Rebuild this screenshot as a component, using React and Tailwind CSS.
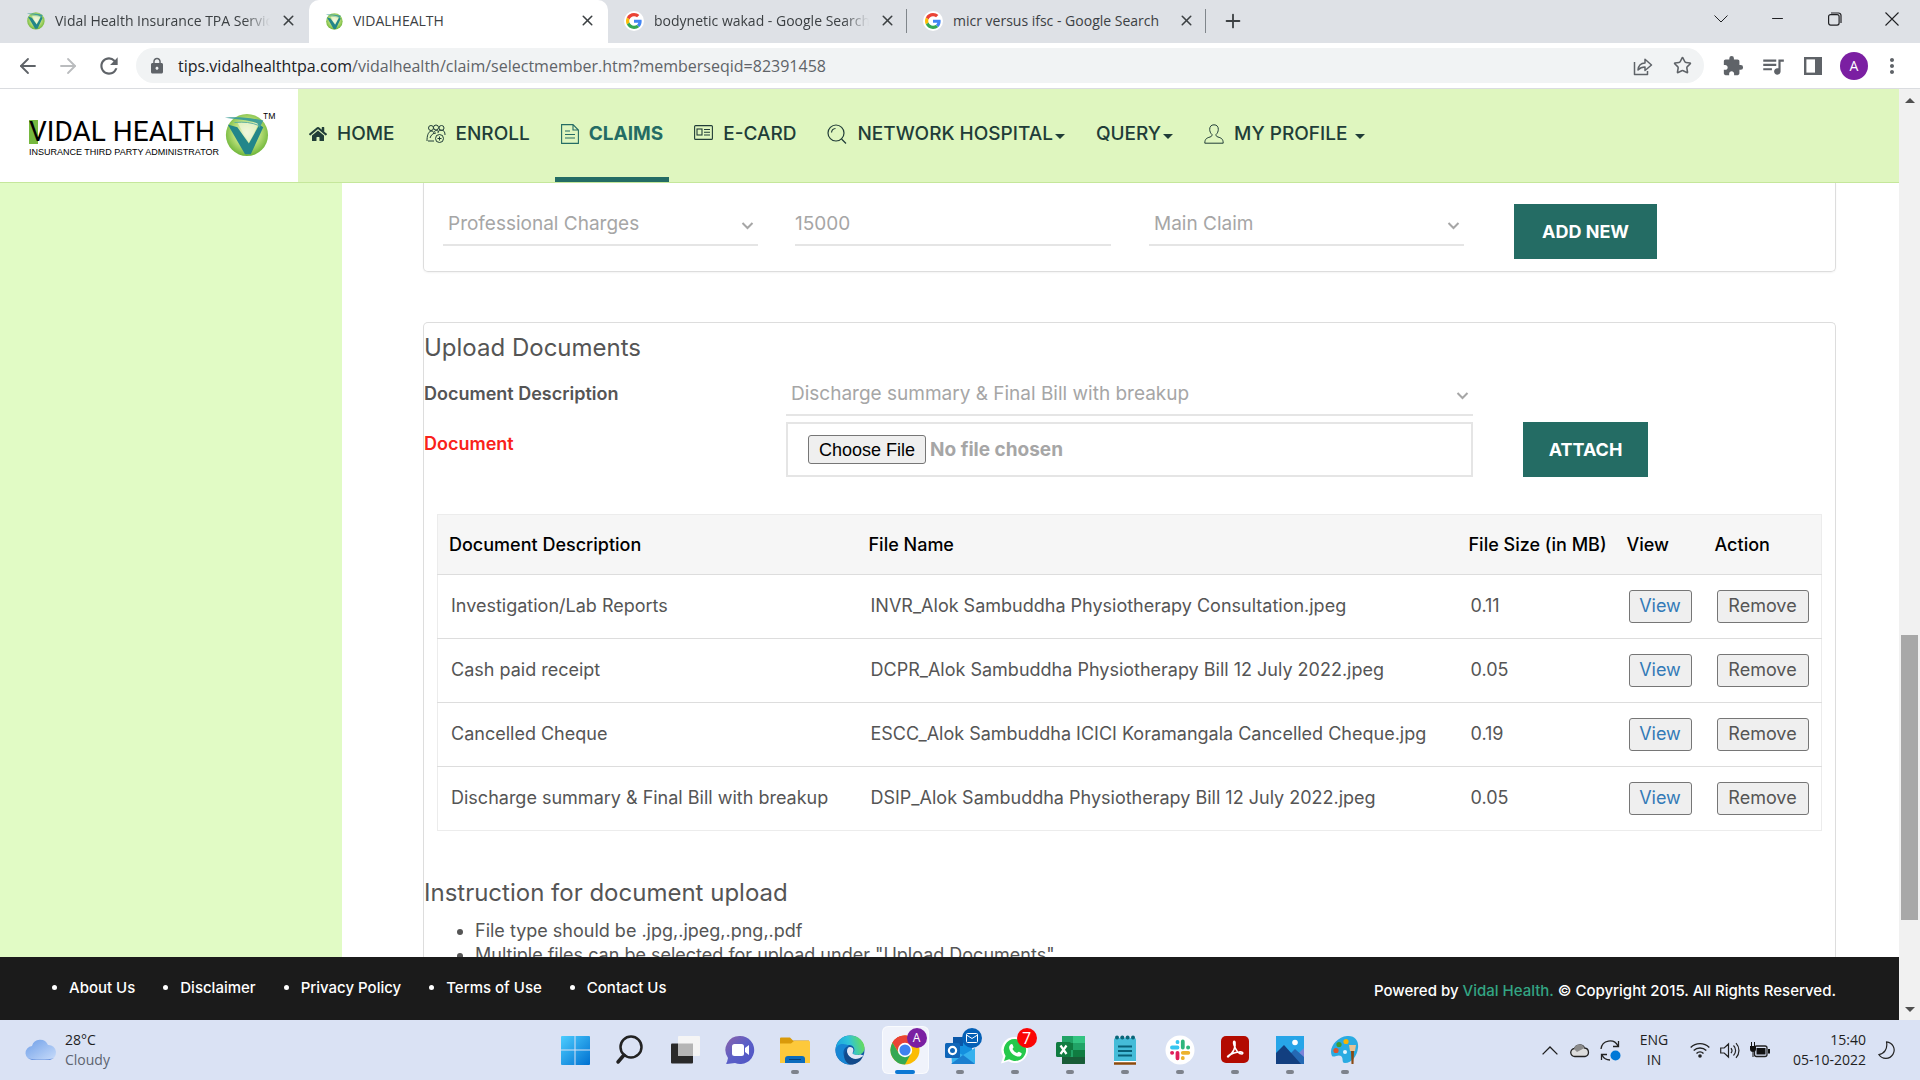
import React from "react";
import { ArrowLeft, ArrowRight, Star, X, Plus, Minus } from "lucide-react";
import { MdLock, MdExtension, MdQueueMusic, MdMoreVert, MdRefresh } from "react-icons/md";
import { FaHome } from "react-icons/fa";

const page = "font-[Inter,sans-serif]";

function VidalMark({ className }) {
  return (
    <svg viewBox="0 0 48 48" className={className} aria-hidden="true">
      <defs>
        <radialGradient id="vm" cx="0.5" cy="0.45" r="0.55">
          <stop offset="0" stopColor="#f4fae2" />
          <stop offset="0.6" stopColor="#b5dc74" />
          <stop offset="1" stopColor="#6fb63a" />
        </radialGradient>
      </defs>
      <ellipse cx="25" cy="25" rx="22" ry="22" fill="url(#vm)" />
      <path d="M15 12 L38 12 L27 33 Z" fill="#f0f7da" opacity="0.7" />
      <path d="M5 14 L15 17 L27 34 L38 14 L42 17 L29 45 L23 45 Z" fill="#23868a" />
      <path d="M2 7 C16 6 28 7 42 10 L38 18 L36 13 C28 9 14 9 2 7 Z" fill="#3f9f98" />
      <path d="M12 12 C22 11 30 12 37 15" stroke="#5aada0" fill="none" />
    </svg>
  );
}

function GoogleG() {
  return (
    <span className="flex size-5 shrink-0 items-center justify-center rounded-full bg-white">
      <svg viewBox="0 0 48 48" className="size-4" aria-hidden="true">
        <path fill="#EA4335" d="M24 9.5c3.54 0 6.71 1.22 9.21 3.6l6.85-6.85C35.9 2.38 30.47 0 24 0 14.62 0 6.51 5.38 2.56 13.22l7.98 6.19C12.43 13.72 17.74 9.5 24 9.5z" />
        <path fill="#4285F4" d="M46.98 24.55c0-1.57-.15-3.09-.38-4.55H24v9.02h12.94c-.58 2.96-2.26 5.48-4.78 7.18l7.73 6c4.51-4.18 7.09-10.36 7.09-17.65z" />
        <path fill="#FBBC05" d="M10.53 28.59c-.48-1.45-.76-2.99-.76-4.59s.27-3.14.76-4.59l-7.98-6.19C.92 16.46 0 20.12 0 24s.92 7.54 2.56 10.78l7.97-6.19z" />
        <path fill="#34A853" d="M24 48c6.48 0 11.93-2.13 15.89-5.81l-7.73-6c-2.15 1.45-4.92 2.3-8.16 2.3-6.26 0-11.57-4.22-13.47-9.91l-7.98 6.19C6.51 42.62 14.62 48 24 48z" />
      </svg>
    </span>
  );
}

function Tab({ title, icon, active, divider, fade }) {
  return (
    <div className={"flex h-full w-[299px] items-center gap-2.5 pb-0.5 pl-4 pr-3 " + (active ? "rounded-t-[10px] bg-white" : "")}>
      {icon}
      <span className={"min-w-0 flex-1 overflow-hidden whitespace-nowrap text-sm text-[#3c4043] " + (fade ? "[mask-image:linear-gradient(to_right,black_88%,transparent)]" : "")}>{title}</span>
      <button type="button" aria-label={"Close " + title} className="text-[#3c4043]"><X size={17} strokeWidth={2.2} /></button>
      {divider && <span className="-mr-3 h-6 w-px bg-[#80868b]" />}
    </div>
  );
}

function BrowserChrome() {
  return (
    <header className="shrink-0 font-['Open_Sans',sans-serif]">
      <div className="flex h-[43px] items-center bg-[#dee1e6]">
        <div className="flex h-full w-[309px] items-center pl-2.5">
          <Tab title="Vidal Health Insurance TPA Services" fade icon={<VidalMark className="size-[19px] shrink-0" />} />
        </div>
        <Tab title="VIDALHEALTH" active icon={<VidalMark className="size-[18px] shrink-0" />} />
        <Tab title="bodynetic wakad - Google Search" fade divider icon={<GoogleG />} />
        <Tab title="micr versus ifsc - Google Search" divider icon={<GoogleG />} />
        <button type="button" aria-label="New tab" className="ml-4 pb-0.5 text-[#3c4043]"><Plus size={22} strokeWidth={2} /></button>
        <div className="ml-auto flex h-full items-center pb-1.5 text-[#202124]">
          <button type="button" aria-label="Search tabs" className="flex w-[57px] justify-center">
            <svg width="16" height="10" viewBox="0 0 16 10" fill="none" stroke="currentColor"><path d="M1.500 1.500 8 8l6.500-6.500" /></svg>
          </button>
          <button type="button" aria-label="Minimize" className="flex w-[57px] justify-center"><Minus size={17} strokeWidth={1.500} /></button>
          <button type="button" aria-label="Restore" className="flex w-[57px] justify-center">
            <svg width="14" height="14" viewBox="0 0 14 14" fill="none" stroke="currentColor" strokeWidth="1.2"><rect x="0.600" y="2.600" width="10.500" height="10.500" rx="2" /><path d="M3 1h7.500A2.500 2.500 0 0 1 13 3.500V11" /></svg>
          </button>
          <button type="button" aria-label="Close window" className="flex w-[57px] justify-center">
            <svg width="14" height="14" viewBox="0 0 14 14" stroke="currentColor" strokeWidth="1.100"><path d="M.5.5l13 13M13.500.5l-13 13" /></svg>
          </button>
        </div>
      </div>
      <div className="flex h-[46px] items-center border-b border-[#dadce0] bg-white px-4 text-[#5f6368]">
        <button type="button" aria-label="Back" className="mr-4"><ArrowLeft size={24} strokeWidth={1.800} /></button>
        <button type="button" aria-label="Forward" className="mr-4 text-[#babcbe]"><ArrowRight size={24} strokeWidth={1.800} /></button>
        <button type="button" aria-label="Reload" className="mr-3.5"><MdRefresh size={26} /></button>
        <div className="flex h-[35px] flex-1 items-center rounded-full bg-[#f1f3f4] px-3">
          <MdLock size={18} className="mr-3" />
          <span className="flex-1 text-base"><span className="text-[#202124]">tips.vidalhealthtpa.com</span>/vidalhealth/claim/selectmember.htm?memberseqid=82391458</span>
          <button type="button" aria-label="Share" className="mr-5">
            <svg width="20" height="20" viewBox="0 0 20 20" fill="none" stroke="currentColor" strokeWidth="1.500"><path d="M1.500 6v12.500h13V15M5 14c.5-4.500 3-7 7-7V3.200L18.500 9 12 14.500V11c-3 0-5 .8-7 3z" strokeLinejoin="round" /></svg>
          </button>
          <button type="button" aria-label="Bookmark"><Star size={19} strokeWidth={2} /></button>
        </div>
        <button type="button" aria-label="Extensions" className="ml-[18px]"><MdExtension size={22} /></button>
        <button type="button" aria-label="Media" className="ml-4"><MdQueueMusic size={26} /></button>
        <button type="button" aria-label="Side panel" className="ml-[18px]">
          <svg width="18" height="18" viewBox="0 0 18 18" fill="none" stroke="currentColor"><rect x="1.200" y="1.200" width="15.600" height="15.600" strokeWidth="2.400" /><path d="M13.500 1v16" strokeWidth="5" /></svg>
        </button>
        <button type="button" aria-label="Profile" className="ml-[18px] flex size-7 items-center justify-center rounded-full bg-[#7b1fa2] text-sm text-white">A</button>
        <button type="button" aria-label="Menu" className="ml-3"><MdMoreVert size={24} /></button>
      </div>
    </header>
  );
}

const navIcons = {
  home: <FaHome size={18} />,
  enroll: (
    <svg width="20" height="20" viewBox="0 0 20 20" fill="none" stroke="currentColor" strokeWidth="1"><circle cx="5" cy="4" r="2.500" /><circle cx="10" cy="3.500" r="2.500" /><circle cx="15.500" cy="4" r="2.500" /><path d="M1 17c0-5 1-9 4-10 2 0 3 1 3 3M12 9c0-2 1-3 3-3 3 0 4 2 4 5M2 17h6M8 8c1-2 4-2 5 0M4 14c1-3 3-5 6-5" /><circle cx="13.500" cy="14.500" r="4" /><path d="M13.500 12.500v4M11.500 14.500h4" /></svg>
  ),
  claims: (
    <svg width="18" height="20" viewBox="0 0 18 20" fill="none" stroke="currentColor" strokeWidth="1.100"><path d="M.6.6h11.400l5.400 5.400v13.400H.6zM12 .6V6h5.400M4 7h5M4 10.500h10M4 14h10" /></svg>
  ),
  card: (
    <svg width="19" height="15" viewBox="0 0 19 15" fill="none" stroke="currentColor" strokeWidth="1.100" className="mb-1"><rect x=".6" y=".6" width="17.800" height="13.800" rx="1" /><rect x="3" y="4" width="5" height="6" /><path d="M10 4.500h6M10 7.300h6M10 10h6" /></svg>
  ),
  search: (
    <svg width="20" height="20" viewBox="0 0 20 20" fill="none" stroke="currentColor" strokeWidth="1.200"><circle cx="9" cy="9" r="8" /><path d="M14.500 15l4.500 4.500M4.500 8.500A4.500 4.500 0 0 1 8.500 4.500" /></svg>
  ),
  user: (
    <svg width="20" height="20" viewBox="0 0 20 20" fill="none" stroke="currentColor" strokeWidth="1"><path d="M10 .8c-3 0-4.300 2-4.300 4.500 0 2 .8 4 2.300 5.200 0 1.500-.3 1.900-2 2.500-3.200 1-5.200 1.800-5.200 6.200h18.400c0-4.400-2-5.200-5.200-6.200-1.700-.6-2-1-2-2.500 1.500-1.200 2.300-3.200 2.300-5.200C14.300 2.800 13 .8 10 .8z" /></svg>
  ),
};

const nav = [
  { label: "HOME", icon: "home" },
  { label: "ENROLL", icon: "enroll" },
  { label: "CLAIMS", icon: "claims", active: true },
  { label: "E-CARD", icon: "card" },
  { label: "NETWORK HOSPITAL", icon: "search", caret: true },
  { label: "QUERY", caret: true },
  { label: "MY PROFILE", icon: "user", caret: true, spaced: true },
];

function SiteHeader() {
  return (
    <div className={"flex h-[94px] shrink-0 border-b border-[#c5e79b] bg-[#dff6bf] " + page}>
      <a href="#home" className="flex w-[298px] items-center bg-white pl-[29px] text-black">
        <span className="flex flex-col pt-1.5">
          <span className="flex font-[Roboto,sans-serif] text-[28px] leading-6">
            <span className="bg-[linear-gradient(to_right,#76b83f_50%,transparent_50%)]">V</span>
            <span>IDAL HEALTH</span>
          </span>
          <span className="mt-0.5 font-['Liberation_Sans',sans-serif] text-[9px] leading-3">INSURANCE THIRD PARTY ADMINISTRATOR</span>
        </span>
        <VidalMark className="mb-1 ml-1 size-[46px] shrink-0" />
        <span className="-ml-1.5 mb-10 text-[8px] leading-3">TM</span>
      </a>
      <nav className="flex gap-[19px] pl-[5px] text-[19px] font-medium text-[#213d38]">
        {nav.map((n) => (
          <a key={n.label} href="#nav" className={"flex items-center gap-2.5 border-b-[5px] px-1.5 pb-3 pt-3.5 " + (n.active ? "border-[#246c64] font-bold text-[#246c64]" : "border-transparent")}>
            {n.icon && navIcons[n.icon]}
            <span className={"flex items-center whitespace-nowrap " + (n.spaced ? "gap-2" : "gap-0.5")}>
              {n.label}
              {n.caret && <span className="mt-1 border-x-5 border-t-5 border-x-transparent border-t-current" />}
            </span>
          </a>
        ))}
      </nav>
    </div>
  );
}

function Select({ label, value, className }) {
  return (
    <div className={"relative " + className}>
      <select aria-label={label} defaultValue={value} className="h-11 w-full appearance-none border-b-2 border-[#e5e5e5] bg-white pl-[5px] pr-8 pt-0.5 text-[19px] text-[#a6a6a6]">
        <option>{value}</option>
      </select>
      <svg className="pointer-events-none absolute right-1 top-[18px] text-[#a6a6a6]" width="13" height="12" viewBox="0 0 13 12" fill="none" stroke="currentColor" strokeWidth="2"><path d="M1.500 3l5 5 5-5" /></svg>
    </div>
  );
}

const rows = [
  ["Investigation/Lab Reports", "INVR_Alok Sambuddha Physiotherapy Consultation.jpeg", "0.11"],
  ["Cash paid receipt", "DCPR_Alok Sambuddha Physiotherapy Bill 12 July 2022.jpeg", "0.05"],
  ["Cancelled Cheque", "ESCC_Alok Sambuddha ICICI Koramangala Cancelled Cheque.jpg", "0.19"],
  ["Discharge summary & Final Bill with breakup", "DSIP_Alok Sambuddha Physiotherapy Bill 12 July 2022.jpeg", "0.05"],
];

function Documents() {
  return (
    <table className="w-full table-fixed border-collapse border border-[#ececec] text-left text-lg text-[#555]">
      <colgroup>
        <col className="w-[420px]" />
        <col />
        <col className="w-[158px]" />
        <col className="w-[88px]" />
        <col className="w-[118px]" />
      </colgroup>
      <thead className="bg-[#f6f6f6] text-black">
        <tr className="h-[60px] border-b border-[#ddd]">
          {["Document Description", "File Name", "File Size (in MB)", "View", "Action"].map((h) => (
            <th key={h} className="whitespace-nowrap pl-[11px] font-medium">{h}</th>
          ))}
        </tr>
      </thead>
      <tbody>
        {rows.map(([desc, file, size]) => (
          <tr key={file} className="h-16 border-b border-[#ddd] last:border-[#ececec]">
            <td className="whitespace-nowrap pb-0.5 pl-[13px]">{desc}</td>
            <td className="whitespace-nowrap pb-0.5 pl-[13px]">{file}</td>
            <td className="pb-0.5 pl-[13px]">{size}</td>
            <td className="pl-[13px]"><button type="button" className="h-[33px] w-[63px] rounded-[3px] border border-[#767676] bg-[#efefef] pb-0.5 text-[#337ab7]">View</button></td>
            <td className="pl-[13px]"><button type="button" className="h-[33px] w-[92px] rounded-[3px] border border-[#767676] bg-[#efefef] pb-0.5">Remove</button></td>
          </tr>
        ))}
      </tbody>
    </table>
  );
}

function Content() {
  return (
    <div className={"flex min-h-0 flex-1 overflow-hidden " + page}>
      <aside className="w-[342px] shrink-0 bg-[#e1fbc5]" />
      <main className="min-w-0 flex-1 bg-white pl-[81px] pr-[63px] text-[#555]">
        <section className="flex h-[89px] items-start rounded-b-[5px] border border-t-0 border-[#ddd] pl-[19px] pt-[19px] shadow-xs">
          <Select label="Charge type" value="Professional Charges" className="mr-[37px] w-[315px]" />
          <input aria-label="Amount" defaultValue="15000" className="mr-[38px] h-11 w-[316px] border-b-2 border-[#e5e5e5] text-[19px] text-[#a6a6a6]" />
          <Select label="Claim type" value="Main Claim" className="mr-[50px] w-[315px]" />
          <button type="button" className="mt-0.5 h-[55px] w-[143px] bg-[#246c64] text-lg font-bold text-white">ADD NEW</button>
        </section>
        <section className="mt-[50px] rounded-t-[5px] border border-b-0 border-[#ddd] pb-10">
          <h2 className="pt-[9px] text-2xl leading-8">Upload Documents</h2>
          <div className="mt-2 grid grid-cols-[362px_687px_1fr] gap-y-1.5">
            <span className="pt-2 text-lg font-semibold">Document Description</span>
            <Select label="Document Description" value="Discharge summary & Final Bill with breakup" className="col-start-2" />
            <label htmlFor="doc" className="row-start-2 pt-2 text-lg font-semibold text-[#f9221a]">Document</label>
            <input id="doc" type="file" className="row-start-2 h-[55px] border-2 border-[#e5e5e5] pl-5 pt-[11px] text-[19px] leading-7 font-bold text-[#a6a6a6] file:mr-1 file:h-[29px] file:rounded-[3px] file:border file:border-solid file:border-[#767676] file:bg-[#efefef] file:px-2.5 file:font-['Liberation_Sans',sans-serif] file:text-lg file:leading-6 file:font-normal file:text-black" />
            <button type="button" className="row-start-2 ml-[50px] h-[55px] w-[125px] bg-[#246c64] text-lg font-bold text-white">ATTACH</button>
          </div>
          <div className="mx-[13px] mt-[37px]"><Documents /></div>
          <h2 className="mt-[46px] text-2xl leading-8">Instruction for document upload</h2>
          <ul className="mt-2.5 list-disc pl-[51px] text-lg leading-6">
            <li>File type should be .jpg,.jpeg,.png,.pdf</li>
            <li>Multiple files can be selected for upload under "Upload Documents"</li>
          </ul>
        </section>
      </main>
    </div>
  );
}

function SiteFooter() {
  return (
    <footer className={"flex h-[63px] shrink-0 items-center justify-between bg-[#1b1b1b] pl-[69px] pr-[63px] text-[15px] font-medium text-white " + page}>
      <ul className="flex list-disc gap-[45px]">
        {["About Us", "Disclaimer", "Privacy Policy", "Terms of Use", "Contact Us"].map((t) => (
          <li key={t}><a href="#footer" className="whitespace-nowrap">{t}</a></li>
        ))}
      </ul>
      <p className="pt-1.5">Powered by <a href="#vidal" className="text-[#33a583]">Vidal Health.</a> © Copyright 2015. All Rights Reserved.</p>
    </footer>
  );
}

function Scrollbar() {
  return (
    <div className="flex w-[21px] shrink-0 flex-col items-center bg-[#f1f1f1]" aria-hidden="true">
      <span className="mt-[9px] border-x-5 border-b-5 border-x-transparent border-b-[#505050]" />
      <span className="w-full grow-[531]" />
      <span className="w-[17px] grow-[285] bg-[#a8a8a8]" />
      <span className="w-full grow-[87]" />
      <span className="mb-2 border-x-5 border-t-5 border-x-transparent border-t-[#505050]" />
    </div>
  );
}

const Svg = ({ children }) => <svg viewBox="0 0 30 30" className="size-[30px]" aria-hidden="true">{children}</svg>;

const apps = [
  ["Start", <Svg><defs><linearGradient id="win" x1="0" y1="0" x2="1" y2="1"><stop offset="0" stopColor="#4ccdff" /><stop offset="1" stopColor="#0070d0" /></linearGradient></defs><path fill="url(#win)" d="M1 2a1 1 0 0 1 1-1h12.500v13.500H1zM15.500 1H29a1 1 0 0 1 1 1v12.500H15.500zM1 15.500h13.500V30H2a1 1 0 0 1-1-1zM15.500 15.500H30V29a1 1 0 0 1-1 1H15.500z" /></Svg>],
  ["Search", <Svg><circle cx="16" cy="12" r="10.500" fill="none" stroke="#222" strokeWidth="2.500" /><path d="M9 20l-6 7" stroke="#222" strokeWidth="3.500" strokeLinecap="round" /></Svg>],
  ["Task view", <Svg><rect x="1" y="8.500" width="22" height="20" rx="1" fill="#292929" /><rect x="8" y="1" width="22" height="20" rx="1" fill="#f5f5f5" /><path d="M8 8.500h15V21H8z" fill="#b5b5b5" /></Svg>],
  ["Chat", <Svg><defs><linearGradient id="chat" x1="0" y1="0" x2="1" y2="1"><stop offset="0" stopColor="#8d62a8" /><stop offset="0.500" stopColor="#5b5fc7" /><stop offset="1" stopColor="#4f54c4" /></linearGradient></defs><path d="M15 1a14 14 0 1 1-5 27l-8 1c-1 0-1-1 0-2l1-4A14 14 0 0 1 15 1z" fill="url(#chat)" /><rect x="7" y="9" width="12" height="12" rx="2.500" fill="#fff" /><path d="M20 13l4-3v10l-4-3z" fill="#fff" /></Svg>],
  ["File Explorer", <Svg><path d="M0 3.500a1 1 0 0 1 1-1h9l3 3h16V9H0z" fill="#d99a0a" /><path d="M0 8.500h11l3-2.500h15a1 1 0 0 1 1 1v21H0z" fill="#fdc93b" /><path d="M5 28v-4a3 3 0 0 1 3-3h14a3 3 0 0 1 3 3v4z" fill="#0b6cbd" /><path d="M9 24.500h12" stroke="#063f78" /></Svg>, true],
  ["Edge", <Svg><defs><linearGradient id="eg" x1="0" y1="0.600" x2="1" y2="0.400"><stop offset="0" stopColor="#1aa0e0" /><stop offset="0.500" stopColor="#2fc3d8" /><stop offset="1" stopColor="#6ade52" /></linearGradient></defs><circle cx="15" cy="15" r="14.500" fill="#0f59a4" /><path d="M.5 15C1 6 7 .5 15 .5 24 .5 29.500 7 29.500 13c0 4-3 7-7 7-3 0-5-1-4.500-2 3-3 1-8-4-8C7 10 2 14 .5 15z" fill="url(#eg)" /><path d="M.5 15C2 8 10 8 14 11c-7 1-8 11 1 18.500C7 29.500.5 23 .5 15z" fill="#1786d4" /><path d="M15 12c4 0 4 4 2.500 6 0 1 3 3 8 1.500l3 1-1.500 4c-7 2-15-3-15-8 0-3 1-4.500 3-4.500z" fill="#e1e7f5" /><path d="M12 15c-1 8 9 12 16 6-2 6-8 9-13 8.500C8 27 8 18 12 15z" fill="#124a8a" /></Svg>],
  ["Chrome", <Svg><circle cx="15" cy="15" r="14.500" fill="#fbbc04" /><path d="M15 15L2.440 7.750A14.500 14.500 0 0 1 27.560 7.750z" fill="#ea4335" /><path d="M15 8h12.560A14.500 14.500 0 0 0 2.440 7.750L9 18z" fill="#ea4335" /><path d="M2.440 7.750A14.500 14.500 0 0 0 15 29.500L21 18.500 9 18.500z" fill="#34a853" /><circle cx="15" cy="15" r="7.200" fill="#fff" /><circle cx="15" cy="15" r="5.600" fill="#3f82f0" /></Svg>, true],
  ["Outlook", <Svg><path d="M8 2h19v20H8z" fill="#1490df" /><path d="M8 2h10v9H8z" fill="#0a57a8" /><path d="M6 14l12 6 12-7v15a1 1 0 0 1-1 1H7z" fill="#35b1ee" /><path d="M6 29l12-9 12 9z" fill="#1a7fd0" /><rect x="0" y="8" width="15" height="15" rx="1.500" fill="#0f65b8" /><circle cx="7.500" cy="15.500" r="3.600" fill="none" stroke="#fff" strokeWidth="2.200" /></Svg>, true],
  ["WhatsApp", <Svg><path d="M15 2a13 13 0 1 1-6.500 24.300L1 28.500l2.200-7A13 13 0 0 1 15 2z" fill="#fff" /><path d="M15 4a11 11 0 1 1-5.800 20.300L4 26l1.600-5A11 11 0 0 1 15 4z" fill="#25c94b" /><path d="M10.500 9.500c1-1 2-.5 2.300.5l.7 2c.2.6-1 1.500-1 2 1 2 2.500 3 4.500 4 .6 0 1.200-1.500 2-1.200l2.300 1.200c.8.400.2 2-.5 2.700-1.500 1.300-3.500 1-5.500 0-2.500-1.200-4.500-3.200-5.500-5.500-1-2-1-4.200.7-5.700z" fill="#fff" /></Svg>, true],
  ["Excel", <Svg><path d="M7 1h22a1 1 0 0 1 1 1v26a1 1 0 0 1-1 1H7z" fill="#21a366" /><path d="M18 1h11a1 1 0 0 1 1 1v6H18z" fill="#33c481" /><path d="M7 8h11v7H7z" fill="#107c41" /><path d="M7 22h23v6a1 1 0 0 1-1 1H7z" fill="#185c37" /><path d="M18 15h12v7H18z" fill="#107c41" /><rect x="1" y="7" width="15" height="15" rx="1.500" fill="#107c41" /><path d="M5.500 10.500l6 8.500M11.500 10.500l-6 8.500" stroke="#fff" strokeWidth="2.200" /></Svg>, true],
  ["Notepad", <Svg><rect x="4" y="3" width="22" height="25" rx="1.500" fill="#45bcd8" /><path d="M4 26h22v3H4z" fill="#fff" /><path d="M4 28.500h22" stroke="#8d4a0b" strokeWidth="2.500" /><path d="M8 11.500h14M8 16h14M8 20.500h14" stroke="#086078" strokeWidth="1.800" /><g fill="#0a6679"><circle cx="7" cy="2.500" r="2" /><circle cx="12.300" cy="2.500" r="2" /><circle cx="17.600" cy="2.500" r="2" /><circle cx="23" cy="2.500" r="2" /></g></Svg>, true],
  ["Slack", <Svg><circle cx="15" cy="15" r="14.500" fill="#fff" /><g strokeWidth="3.800" strokeLinecap="round"><path d="M12.500 7v.2M7 12.500h5.500" stroke="#36c5f0" /><path d="M17.800 6.500v6M23 12.500h.2" stroke="#2eb67d" /><path d="M17.800 17.800h5.500M17.800 23v.2" stroke="#ecb22e" /><path d="M12.500 17.800v5.500M7 17.800h.2" stroke="#e01e5a" /></g></Svg>, true],
  ["Acrobat", <Svg><rect x="1" y="1" width="28" height="27" rx="5" fill="#b30b00" /><path d="M8 21c5-2 8-9 7-14-1-2-2 0-1 3 2 6 5 9 8 9 2-1 0-2.500-3-2-4 .3-8 2-10 4-1 1.500-2 .8-1 0z" fill="none" stroke="#fff" strokeWidth="1.600" /></Svg>, true],
  ["Photos", <Svg><path d="M1 1h28v28H1z" fill="#27a5e8" /><path d="M29 13l-8 8 8 7z" fill="#7b83d8" /><path d="M14 20l6-6 9 8v7H14z" fill="#2469b4" /><path d="M1 18l8-8 17 19H1z" fill="#123f80" /><circle cx="20" cy="7.500" r="2.800" fill="#fff" /></Svg>, true],
  ["Paint", <Svg><path d="M17 1c8-1 12 5 11 12-1 8-6 15-13 15-4 0-1-5-4-7-3-2-7 2-9 0C-2 13 7 2 17 1z" fill="#29abe2" /><circle cx="16" cy="6.500" r="2.600" fill="#f7b500" /><circle cx="9" cy="9.500" r="2.600" fill="#3c9b35" /><circle cx="6" cy="15.500" r="2.600" fill="#d9542b" /><circle cx="15" cy="17" r="2" fill="#e6f5fc" /><path d="M19 10h7l-1 6h-5z" fill="#e7c293" /><path d="M21 16h3l-.5 13h-2z" fill="#8a4b14" /></Svg>, true],
];

function Taskbar() {
  return (
    <div className="grid h-[60px] shrink-0 grid-cols-[1fr_auto_1fr] bg-[#dae2f4] font-['Open_Sans',sans-serif] text-sm text-[#1f1f1f]">
      <div className="flex items-center gap-2 pl-[25px]">
        <svg width="32" height="24" viewBox="0 0 32 24" aria-hidden="true"><defs><linearGradient id="cl" x1="0" y1="0" x2="1" y2="1"><stop offset="0" stopColor="#6f9fe8" /><stop offset="1" stopColor="#c9dcfa" /></linearGradient></defs><path d="M8 22a7 7 0 0 1-1-14A8.500 8.500 0 0 1 23 7a7.500 7.500 0 0 1 1 15z" fill="url(#cl)" /><path d="M3 20c5 2 20 2 26 0l-4 2H7z" fill="#6b94de" /></svg>
        <div className="leading-5"><div>28°C</div><div className="text-[#5d6470]">Cloudy</div></div>
      </div>
      <div className="flex">
        {apps.map(([name, icon, running]) => (
          <button key={name} type="button" aria-label={name} className="relative flex w-[55px] items-center justify-center">
            {name === "Chrome" && <span className="absolute inset-x-1 inset-y-1.5 rounded-md border border-white/60 bg-white/60" />}
            <span className="relative">{icon}</span>
            {running && <span className={"absolute bottom-1.5 h-1 rounded-full " + (name === "Chrome" ? "w-5 bg-[#0b78d4]" : "w-2 bg-[#7d828c]")} />}
            {name === "Chrome" && <span className="absolute right-1.5 top-2 flex size-5 items-center justify-center rounded-full bg-[#7b1fa2] text-xs text-white">A</span>}
            {name === "Outlook" && (
              <span className="absolute right-1.5 top-2 flex size-5 items-center justify-center rounded-full bg-[#0560b6]">
                <svg width="12" height="10" viewBox="0 0 12 10" fill="none" stroke="#fff"><rect x=".5" y=".5" width="11" height="9" rx="1" /><path d="M.5 2l5.500 3.500L11.500 2" /></svg>
              </span>
            )}
            {name === "WhatsApp" && <span className="absolute right-1.5 top-2 flex size-5 items-center justify-center rounded-full bg-[#fb0505] text-base text-white">7</span>}
          </button>
        ))}
      </div>
      <div className="flex items-center justify-end pr-[25px]">
        <svg width="16" height="9" viewBox="0 0 16 9" fill="none" stroke="#1f1f1f" strokeWidth="1.300" className="mr-3"><path d="M.6 8.400L8 1l7.400 7.400" /></svg>
        <svg width="20" height="15" viewBox="0 0 20 15" className="mr-2.5"><path d="M5 13.500a4 4 0 0 1-.5-8A5.500 5.500 0 0 1 14.500 5a4.300 4.300 0 0 1 .5 8.500z" fill="#ddd" stroke="#222" strokeWidth="1.300" /><path d="M4 6a5.500 5.500 0 0 1 10.500-1L7 9z" fill="#8b8b8b" /></svg>
        <svg width="21" height="21" viewBox="0 0 21 21" fill="none" stroke="#222" strokeWidth="1.300" className="mr-[18px]"><path d="M1 9a9 9 0 0 1 17-3M18.500 1v5.500H13M1.500 20v-5.500H7M2 15a9 9 0 0 0 8 5" /><circle cx="15.500" cy="15.500" r="5" fill="#0078d7" stroke="none" /></svg>
        <div className="w-[30px] text-center leading-5">ENG<br />IN</div>
        <svg width="20" height="16" viewBox="0 0 20 16" fill="none" stroke="#222" strokeWidth="1.400" className="ml-[21px] mr-2.5"><path d="M.7 5.500a13 13 0 0 1 18.600 0M3.700 8.500a9 9 0 0 1 12.600 0M6.500 11.500a5 5 0 0 1 7 0" /><circle cx="10" cy="14" r="1.800" fill="#222" stroke="none" /></svg>
        <svg width="20" height="17" viewBox="0 0 20 17" fill="none" stroke="#222" strokeWidth="1.200" className="mr-2.5"><path d="M.7 6h3.500L8.500 2v13l-4.300-4H.7zM11 6a4 4 0 0 1 0 5M13.500 3.500a7 7 0 0 1 0 10M16 1.200a10.500 10.500 0 0 1 0 14.600" /></svg>
        <svg width="20" height="16" viewBox="0 0 20 16" className="mr-5"><rect x="4.500" y="4" width="12.500" height="10.500" rx="2" fill="none" stroke="#222" strokeWidth="1.300" /><path d="M6.500 6h9v6.500h-9zM18 7h2v4.500h-2zM0 4h6v3a3 3 0 0 1-6 0zM1 0h1v4H1zM4 0h1v4H4zM2.500 9h1v6h-1z" fill="#111" /></svg>
        <div className="w-[76px] text-right leading-5">15:40<br />05-10-2022</div>
        <svg width="17" height="18" viewBox="0 0 17 18" fill="none" stroke="#222" strokeWidth="1.200" className="ml-3"><path d="M8.500.8A8.300 8.300 0 1 1 .8 13.500C6 13 10 8 8.500.8z" strokeLinejoin="round" /></svg>
      </div>
    </div>
  );
}

export default function App() {
  return (
    <div className="flex h-screen flex-col overflow-hidden bg-white">
      <BrowserChrome />
      <div className="flex min-h-0 flex-1">
        <div className="flex min-w-0 flex-1 flex-col">
          <SiteHeader />
          <Content />
          <SiteFooter />
        </div>
        <Scrollbar />
      </div>
      <Taskbar />
    </div>
  );
}
